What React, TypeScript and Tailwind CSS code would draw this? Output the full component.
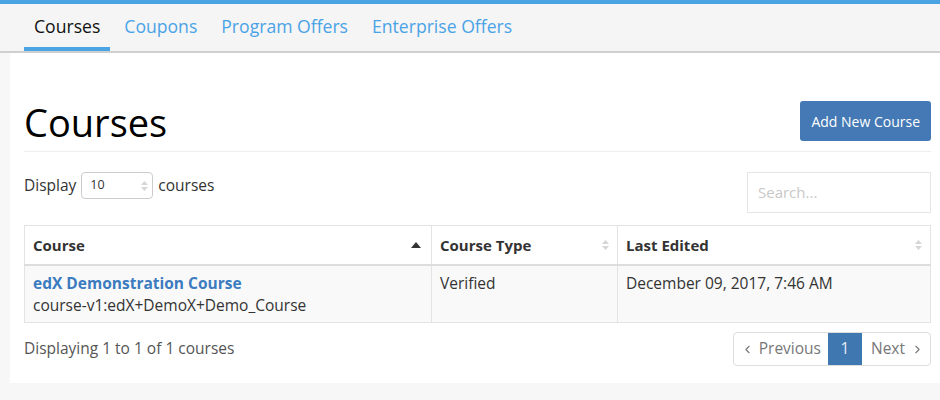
import { ChevronLeft, ChevronRight } from "lucide-react";

const tabs = ["Courses", "Coupons", "Program Offers", "Enterprise Offers"];

function SortBoth() {
  return (
    <svg width="7" height="10" viewBox="0 0 7 10" className="text-[#d6d6d6]">
      <path d="M3.5 0L7 4H0z" fill="currentColor" />
      <path d="M3.5 10L7 6H0z" fill="currentColor" />
    </svg>
  );
}

function SortUp() {
  return (
    <svg width="10" height="6" viewBox="0 0 10 6" className="text-[#333]">
      <path d="M5 0L10 6H0z" fill="currentColor" />
    </svg>
  );
}

export default function App() {
  return (
    <div className="min-h-[400px] bg-[#f7f7f7] font-['Open_Sans',sans-serif] text-[#333]">
      <div className="h-[4px] bg-[#4aa3e2]" />
      <nav className="flex h-[49px] gap-[4px] border-b-2 border-[#cfcfcf] bg-[#f5f5f5] pl-6">
        {tabs.map((t, i) => (
          <a
            key={t}
            href="#"
            className={
              "flex items-center border-b-4 px-[10px] pt-[2px] text-[17.6px] " +
              (i === 0
                ? "border-[#4aa3e2] text-[#111]"
                : "border-transparent text-[#4aa3e6]")
            }
          >
            {t}
          </a>
        ))}
      </nav>

      <main className="ml-[10px] bg-white pb-[17px] pl-[14px] pr-[9px] pt-[48px]">
        <div className="flex h-[40px] items-center justify-between">
          <h1 className="pt-[2px] text-[38px] leading-none text-black">Courses</h1>
          <button className="h-[40px] rounded-[3px] bg-[#4479b5] px-[11px] text-[14px] text-white">
            Add New Course
          </button>
        </div>
        <hr className="mt-[10px] border-t border-[#eeeeee]" />

        <div className="mt-[20px] flex items-start justify-between">
          <div className="flex items-center gap-[5px] text-[15.5px]">
            <span>Display</span>
            <div className="flex h-[27px] w-[72px] items-center justify-between rounded-[4px] border border-[#cccccc] pl-[8px] pr-[4px] text-[12.5px]">
              <span>10</span>
              <SortBoth />
            </div>
            <span>courses</span>
          </div>
          <div className="flex h-[41px] w-[184px] items-center border border-[#e6e6e6] px-[10px] text-[15px] text-[#c8c8c8]">
            Search...
          </div>
        </div>

        <table className="mt-[12px] w-full border-collapse border border-[#e3e3e3] text-[15.5px]">
          <thead>
            <tr className="h-[39px] border-b-2 border-[#dddddd] text-left text-[15px]">
              <th className="w-[407px] border-r border-[#e3e3e3] px-[8px] font-bold">
                <div className="flex items-center justify-between pr-[2px]">
                  Course <SortUp />
                </div>
              </th>
              <th className="w-[186px] border-r border-[#e3e3e3] px-[8px] font-bold">
                <div className="flex items-center justify-between">
                  Course Type <SortBoth />
                </div>
              </th>
              <th className="px-[8px] font-bold">
                <div className="flex items-center justify-between">
                  Last Edited <SortBoth />
                </div>
              </th>
            </tr>
          </thead>
          <tbody>
            <tr className="h-[58px] bg-[#f9f9f9] align-top">
              <td className="border-r border-[#e3e3e3] px-[8px] pt-[6px] leading-[22px]">
                <a href="#" className="font-bold text-[#3b7bbf]">
                  edX Demonstration Course
                </a>
                <div>course-v1:edX+DemoX+Demo_Course</div>
              </td>
              <td className="border-r border-[#e3e3e3] px-[8px] pt-[6px] leading-[22px]">
                Verified
              </td>
              <td className="px-[8px] pt-[6px] leading-[22px]">
                December 09, 2017, 7:46 AM
              </td>
            </tr>
          </tbody>
        </table>

        <div className="mt-[9px] flex items-center justify-between text-[15.5px]">
          <span className="text-[#555]">Displaying 1 to 1 of 1 courses</span>
          <div className="flex h-[34px] overflow-hidden rounded-[4px] border border-[#dddddd] text-[#777]">
            <span className="flex items-center gap-[5px] px-[7px]">
              <ChevronLeft size={13} strokeWidth={2} />
              Previous
            </span>
            <span className="flex w-[34px] items-center justify-center bg-[#3f77b1] text-[#e6eef7]">
              1
            </span>
            <span className="flex items-center gap-[6px] pl-[9px] pr-[6px]">
              Next
              <ChevronRight size={13} strokeWidth={2} />
            </span>
          </div>
        </div>
      </main>
    </div>
  );
}
